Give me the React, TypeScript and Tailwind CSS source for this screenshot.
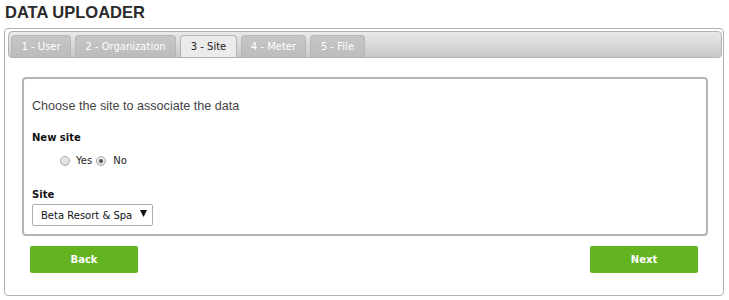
import React from "react";

const tabs = [
  { label: "1 - User", w: "w-[60px]" },
  { label: "2 - Organization", w: "w-[101px]" },
  { label: "3 - Site", w: "w-[57px]" },
  { label: "4 - Meter", w: "w-[65px]" },
  { label: "5 - File", w: "w-[55px]" },
];

function Radio({ checked }: { checked?: boolean }) {
  return (
    <span className="flex items-center justify-center w-[10px] h-[10px] rounded-full border border-[#a9a9a9] bg-gradient-to-b from-[#ececec] to-[#dcdcdc]">
      {checked && <span className="w-[4px] h-[4px] rounded-full bg-[#555]" />}
    </span>
  );
}

export default function App() {
  return (
    <div className="w-[729px] h-[300px] bg-white font-['DejaVu_Sans',sans-serif] text-[#222]">
      <h1 className="pl-[5px] pt-[2px] h-[28px] text-[16.5px] leading-[20px] font-bold font-['Liberation_Sans',sans-serif] text-[#2a2a2a]">
        DATA UPLOADER
      </h1>

      <div className="ml-[4px] w-[720px] h-[268px] border border-[#b0b0b0] rounded-[4px] pt-[2px] pl-[3px] pr-[1px]">
        {/* tab bar */}
        <div className="h-[27px] border border-[#b3b3b3] rounded-[4px] bg-gradient-to-b from-[#e9e9e9] to-[#c9c9c9] pt-[3px] pl-[2px] flex gap-[4px] items-end">
          {tabs.map((t, i) =>
            i === 2 ? (
              <div
                key={t.label}
                className={`${t.w} h-[22px] flex items-center justify-center text-[10px] text-[#222] bg-[#ebebeb] border border-b-0 border-[#b3b3b3] rounded-t-[4px]`}
              >
                {t.label}
              </div>
            ) : (
              <div
                key={t.label}
                className={`${t.w} h-[22px] flex items-center justify-center text-[10px] text-white bg-gradient-to-b from-[#c6c6c6] to-[#bcbcbc] border border-b-0 border-[#b6b6b6] rounded-t-[4px]`}
              >
                {t.label}
              </div>
            )
          )}
        </div>

        {/* panel */}
        <div className="mt-[19px] ml-[14px] w-[686px] h-[159px] border-2 border-[#b5b5b5] rounded-[4px] pl-[8px] pt-[20px]">
          <p className="text-[12.6px] leading-[15px] font-['Liberation_Sans',sans-serif] text-[#444]">
            Choose the site to associate the data
          </p>
          <p className="mt-[18px] text-[10px] leading-[12px] font-bold text-[#111]">New site</p>
          <div className="mt-[11px] h-[12px] flex items-center text-[10px] leading-[12px] text-[#222] pl-[28px]">
            <Radio />
            <span className="ml-[6px]">Yes</span>
            <span className="ml-[4px]">
              <Radio checked />
            </span>
            <span className="ml-[7px]">No</span>
          </div>
          <p className="mt-[22px] text-[10px] leading-[12px] font-bold text-[#111]">Site</p>
          <div className="mt-[3px] w-[121px] h-[22px] border border-[#adadad] rounded-[2px] bg-white flex items-center pl-[8px] pr-[5px] text-[10px] text-[#111]">
            <span className="flex-1">Beta Resort &amp; Spa</span>
            <svg width="7" height="8" viewBox="0 0 7 8" className="-mt-[3px]">
              <path d="M0 0 L7 0 L3.5 7 Z" fill="#111" />
            </svg>
          </div>
        </div>

        {/* buttons */}
        <div className="mt-[10px] ml-[22px] w-[668px] flex justify-between">
          <button className="w-[108px] h-[27px] rounded-[2px] bg-[#63b420] text-white text-[10px] font-bold">
            Back
          </button>
          <button className="w-[108px] h-[27px] rounded-[2px] bg-[#63b420] text-white text-[10px] font-bold">
            Next
          </button>
        </div>
      </div>
    </div>
  );
}
